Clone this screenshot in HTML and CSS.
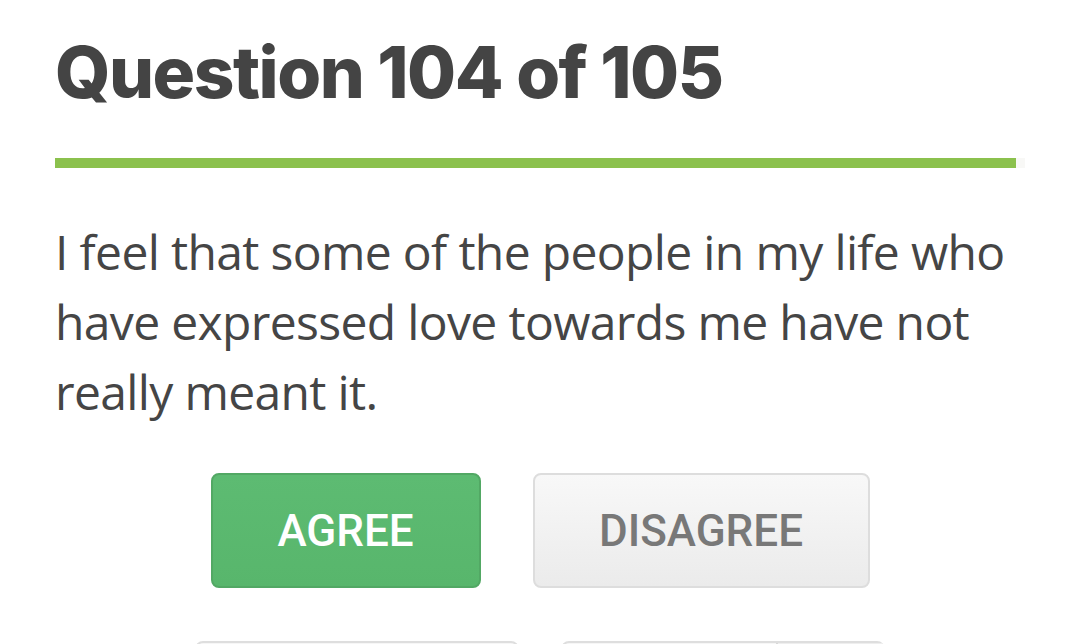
FILE: index.html
```html
<!DOCTYPE html>
<html lang="en">
<head>
<meta charset="utf-8">
<title>Question 104 of 105</title>
<link rel="stylesheet" href="styles.css">
</head>
<body>
<main class="page">
  <h1 class="title">Question 104 of 105</h1>
  <div class="progress"><div class="progress-fill" style="width: 99.05%"></div></div>
  <p class="question">I feel that some of the people in my life who have expressed love towards me have not really meant it.</p>
  <div class="answers">
    <button class="btn btn-agree">AGREE</button>
    <button class="btn btn-disagree">DISAGREE</button>
  </div>
  <div class="nav">
    <button class="nav-btn"></button>
    <button class="nav-btn nav-split"><span class="nav-part"></span></button>
  </div>
</main>
</body>
</html>
```
FILE: styles.css
```css
html, body {
  margin: 0;
  padding: 0;
  background: #ffffff;
  height: 644px;
  overflow: hidden;
}
.page {
  padding: 0 55px;
}
.title {
  margin: 0;
  padding-top: 30px;
  font-family: Inter, "DejaVu Sans", sans-serif;
  font-weight: 800;
  font-size: 71px;
  line-height: 84px;
  letter-spacing: -1.5px;
  color: #444444;
}
.progress {
  margin-top: 44px;
  height: 10px;
  background: #f8f8f6;
}
.progress-fill {
  height: 100%;
  background: #8bc14d;
}
.question {
  margin: 49px 0 0;
  font-family: "Open Sans", sans-serif;
  font-size: 48px;
  letter-spacing: -0.65px;
  line-height: 70px;
  color: #454545;
}
.answers {
  display: flex;
  justify-content: center;
  gap: 52px;
  margin-top: 46px;
}
.btn {
  height: 115px;
  border-radius: 8px;
  font-family: Roboto, sans-serif;
  font-weight: 500;
  font-size: 44px;
  padding: 0;
  cursor: pointer;
}
.btn-agree {
  width: 270px;
  background: linear-gradient(#5dbb72, #58b66c);
  border: 2px solid #52a864;
  color: #ffffff;
}
.btn-disagree {
  width: 337px;
  background: linear-gradient(#f8f8f8, #ebebeb);
  border: 2px solid #dddddd;
  color: #787878;
}
.nav {
  display: flex;
  justify-content: center;
  gap: 42px;
  margin-top: 53px;
}
.nav-btn {
  width: 324px;
  height: 60px;
  padding: 0;
  border: 2px solid #dedede;
  border-radius: 8px;
  background: #f6f6f6;
  display: flex;
  justify-content: flex-end;
}
.nav-part {
  width: 105px;
  height: 100%;
  border-left: 2px solid #d8d8d8;
  background: #eeeeee;
}
```
